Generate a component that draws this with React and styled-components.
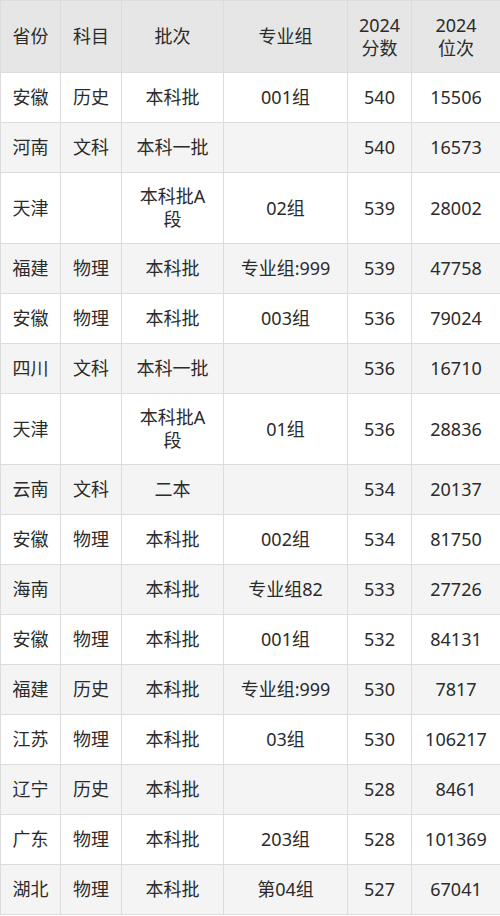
import React from 'react';
import styled, { createGlobalStyle } from 'styled-components';

const GlobalStyle = createGlobalStyle`
  body {
    margin: 0;
    background: #fff;
    font-family: 'Noto Sans', 'Noto Sans CJK SC', sans-serif;
  }
`;

const Table = styled.table`
  width: 500px;
  border-collapse: collapse;
  table-layout: fixed;
  font-size: 18px;
  line-height: 23px;
  color: #2b2b2b;
`;

const Col = styled.col`
  width: ${(p) => p.w}px;
`;

const HeadRow = styled.tr`
  background: #e6e6e6;
`;

const Row = styled.tr`
  background: ${(p) => (p.striped ? '#f4f4f4' : '#fff')};
`;

const Th = styled.th`
  font-weight: normal;
  padding: 12.5px 10px;
  border: 1px solid #dcdcdc;
  text-align: center;
  vertical-align: middle;
`;

const Line = styled.span`
  display: block;
`;

const Td = styled.td`
  height: 25px;
  padding: 12px 10px;
  border: 1px solid #dcdcdc;
  text-align: center;
  vertical-align: middle;
  word-break: break-all;
`;

const widths = [60, 61, 102, 124, 64, 89];
const headers = [['省份'], ['科目'], ['批次'], ['专业组'], ['2024', '分数'], ['2024', '位次']];

const rows = [
  ['安徽', '历史', '本科批', '001组', '540', '15506'],
  ['河南', '文科', '本科一批', '', '540', '16573'],
  ['天津', '', '本科批A段', '02组', '539', '28002'],
  ['福建', '物理', '本科批', '专业组:999', '539', '47758'],
  ['安徽', '物理', '本科批', '003组', '536', '79024'],
  ['四川', '文科', '本科一批', '', '536', '16710'],
  ['天津', '', '本科批A段', '01组', '536', '28836'],
  ['云南', '文科', '二本', '', '534', '20137'],
  ['安徽', '物理', '本科批', '002组', '534', '81750'],
  ['海南', '', '本科批', '专业组82', '533', '27726'],
  ['安徽', '物理', '本科批', '001组', '532', '84131'],
  ['福建', '历史', '本科批', '专业组:999', '530', '7817'],
  ['江苏', '物理', '本科批', '03组', '530', '106217'],
  ['辽宁', '历史', '本科批', '', '528', '8461'],
  ['广东', '物理', '本科批', '203组', '528', '101369'],
  ['湖北', '物理', '本科批', '第04组', '527', '67041'],
];

export default function App() {
  return (
    <>
      <GlobalStyle />
      <Table>
        <colgroup>
          {widths.map((w, i) => (
            <Col key={i} w={w} />
          ))}
        </colgroup>
        <thead>
          <HeadRow>
            {headers.map((h, i) => (
              <Th key={i}>
                {h.map((t) => (
                  <Line key={t}>{t}</Line>
                ))}
              </Th>
            ))}
          </HeadRow>
        </thead>
        <tbody>
          {rows.map((r, i) => (
            <Row key={i} striped={i % 2 === 1}>
              {r.map((c, j) => (
                <Td key={j}>{c}</Td>
              ))}
            </Row>
          ))}
        </tbody>
      </Table>
    </>
  );
}
